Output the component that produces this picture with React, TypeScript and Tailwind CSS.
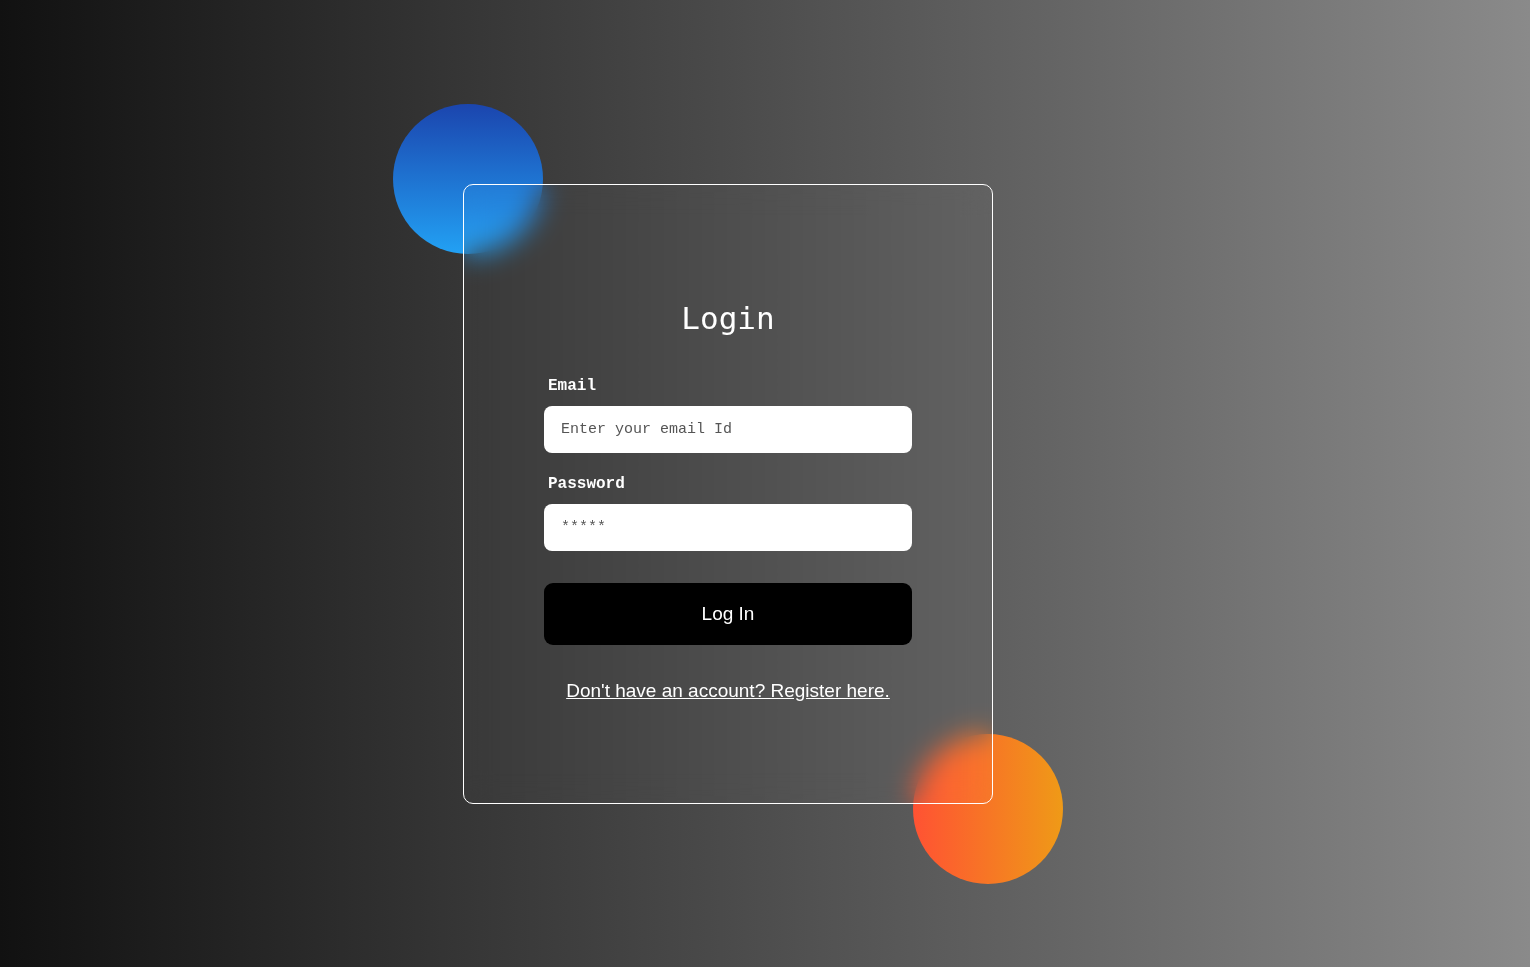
import React from "react";

export default function App() {
  return (
    <div className="min-h-screen w-full bg-[linear-gradient(to_right,#111111,#8a8a8a)] overflow-hidden pt-[184px] pl-[463px]">
      <div className="relative w-[530px] h-[620px]">
        <div className="absolute -left-[70px] -top-[80px] w-[150px] h-[150px] rounded-full bg-[linear-gradient(to_bottom,#1b45ae,#22a1f4)]" />
        <div className="absolute -right-[70px] -bottom-[80px] w-[150px] h-[150px] rounded-full bg-[linear-gradient(to_right,#ff5233,#ef9a17)]" />
        <div className="relative w-full h-full rounded-[10px] border border-white bg-white/[0.02] backdrop-blur-[14px] flex flex-col items-center pt-[113px]">
          <h1 className="text-white text-[31px] leading-[40px] font-['DejaVu_Sans_Mono',monospace] font-medium">Login</h1>
          <form className="w-[368px] mt-[38px] flex flex-col" onSubmit={(e) => e.preventDefault()}>
            <label className="text-white text-[16px] font-bold leading-[20px] pl-[4px] font-['Liberation_Mono',monospace]">Email</label>
            <input
              type="email"
              placeholder="Enter your email Id"
              className="mt-[10px] h-[47px] w-full rounded-[8px] bg-white px-[17px] text-[15px] text-[#333] placeholder:text-[#555] outline-none font-['Liberation_Mono',monospace]"
            />
            <label className="mt-[21px] text-white text-[16px] font-bold leading-[20px] pl-[4px] font-['Liberation_Mono',monospace]">Password</label>
            <input
              type="password"
              placeholder="*****"
              className="mt-[10px] h-[47px] w-full rounded-[8px] bg-white px-[17px] text-[15px] text-[#333] placeholder:text-[#555] outline-none font-['Liberation_Mono',monospace]"
            />
            <button
              type="submit"
              className="mt-[32px] h-[62px] w-full rounded-[9px] bg-black text-white text-[19px] font-['Liberation_Sans',Arial,sans-serif]"
            >
              Log In
            </button>
            <a
              href="#"
              className="mt-[34px] text-center text-white text-[19px] leading-[24px] underline font-['Liberation_Sans',Arial,sans-serif]"
            >
              Don't have an account? Register here.
            </a>
          </form>
        </div>
      </div>
    </div>
  );
}
